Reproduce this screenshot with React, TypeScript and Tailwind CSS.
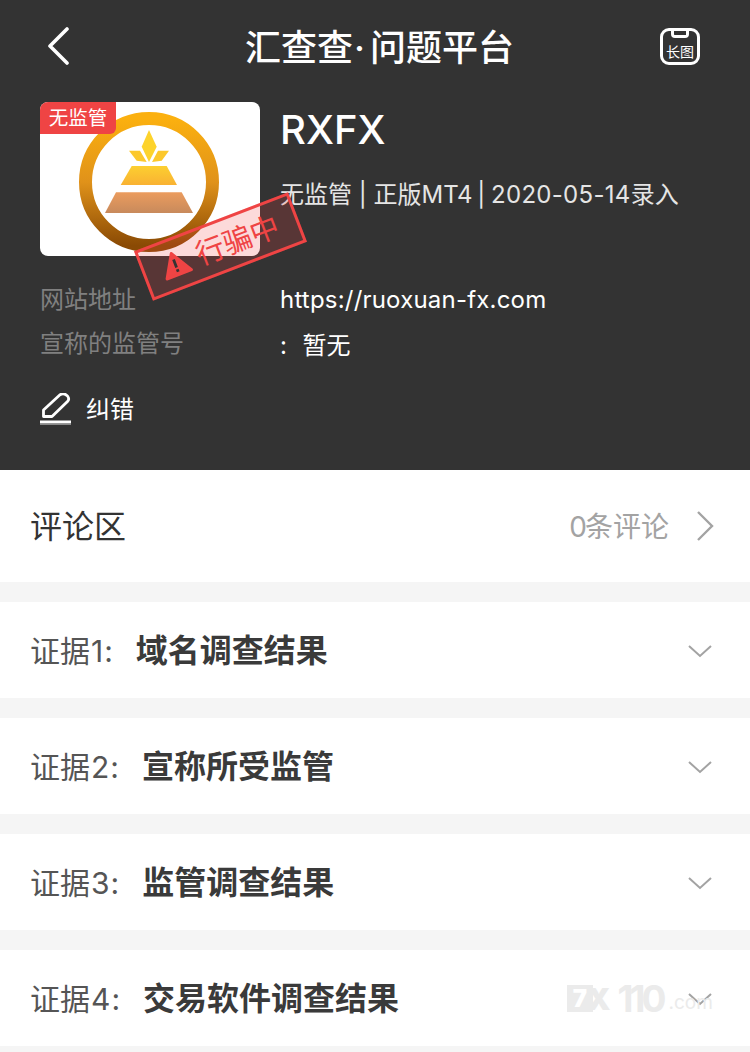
import React from "react";

const font = "font-['Inter','Noto_Sans_CJK_SC',sans-serif]";

function Logo() {
  return (
    <svg width="220" height="154" viewBox="40 102 220 154" className="block">
      <defs>
        <linearGradient id="ring" x1="0" y1="0" x2="0" y2="1">
          <stop offset="0" stopColor="#fbb00f" />
          <stop offset="0.5" stopColor="#e0921a" />
          <stop offset="1" stopColor="#8a4a04" />
        </linearGradient>
        <linearGradient id="top" x1="0" y1="0" x2="0" y2="1">
          <stop offset="0" stopColor="#fccf30" />
          <stop offset="1" stopColor="#f9b233" />
        </linearGradient>
        <linearGradient id="low" x1="0" y1="0" x2="0" y2="1">
          <stop offset="0" stopColor="#eb9c5e" />
          <stop offset="1" stopColor="#c88a5c" />
        </linearGradient>
      </defs>
      <circle cx="149" cy="182" r="63.5" fill="none" stroke="url(#ring)" strokeWidth="13" />
      <path d="M149 130L156.7 146.7L149 162L141.7 146.7Z" fill="#fdd32c" />
      <path d="M129 150.7L140 150.7L146.7 162L136.7 160.7Z" fill="#fcc82c" />
      <path d="M169 150.7L158 150.7L152 162L161.7 160.7Z" fill="#fcc82c" />
      <path d="M131.7 166H166.7L177 185H120.7Z" fill="url(#top)" />
      <path d="M116 192.3H181.7L193 213H105Z" fill="url(#low)" />
    </svg>
  );
}

function Row({ n, title }: { n: number; title: string }) {
  return (
    <div className="flex h-[96px] items-center bg-white pl-[30px] pr-[38px]">
      <span className="pt-[2px] text-[30px] text-[#555]">
        证据<span className="ml-[1px] tracking-[1px]">{n}:</span>
      </span>
      <span className="ml-[22px] pt-[2px] text-[32px] font-bold text-[#3a3a3a]">{title}</span>
      <svg width="24" height="14" viewBox="0 0 24 14" className="ml-auto mt-[2px]" fill="none" stroke="#a3a3a3" strokeWidth="2">
        <path d="M1 2L12 12L23 2" />
      </svg>
    </div>
  );
}

export default function App() {
  return (
    <div className={`relative h-[1052px] w-[750px] overflow-hidden bg-[#f5f5f5] ${font}`}>
      <header className="relative h-[470px] bg-[#333333] text-white">
        <nav className="flex h-[92px] items-center pl-[47px] pr-[50px]">
          <svg width="24" height="38" viewBox="0 0 24 38" fill="none" stroke="white" strokeWidth="3.6" strokeLinecap="round" strokeLinejoin="round">
            <path d="M20 2L3 19L20 36" />
          </svg>
          <h1 className="ml-[174px] pt-[3px] text-[36px] font-medium">
            汇查查<span className="ml-[1px]">·</span><span className="ml-[5px]">问题平台</span>
          </h1>
          <div className="relative ml-auto flex h-[37px] w-[40px] items-end justify-center rounded-[9px] border-[3px] border-white pb-[2px]">
            <div className="absolute left-[8px] top-[-3px] h-[10px] w-[18px] rounded-b-[4px] border-[3px] border-t-0 border-white" />
            <span className="text-[14px] leading-[16px]">长图</span>
          </div>
        </nav>
        <div className="mt-[10px] flex pl-[40px]">
          <div className="relative h-[154px] w-[220px] overflow-hidden rounded-[8px] bg-white">
            <Logo />
            <span className="absolute left-0 top-0 flex h-[32px] w-[76px] items-center justify-center rounded-br-[6px] bg-[#ef4444] pt-[1px] text-[19.5px] text-white">无监管</span>
          </div>
          <div className="ml-[20px]">
            <div className="mt-[3px] text-[40px] font-medium leading-[50px]">RXFX</div>
            <div className="mt-[17px] whitespace-pre text-[24px] leading-[46px] text-[#e5e5e5]">
              无监管 | 正版MT4<span className="ml-[-2px]"> | </span><span className="ml-[-1px] tracking-[0.3px]">2020-05-14</span>录入
            </div>
          </div>
        </div>
        <div className="mt-[22px] grid grid-cols-[240px_1fr] pl-[40px] text-[24px] leading-[44px]">
          <span className="text-[#808080]">网站地址</span>
          <span className="tracking-[0.2px]">https://ruoxuan-fx.com</span>
          <span className="text-[#808080]">宣称的监管号</span>
          <span className="whitespace-pre pt-[2px]">: <span className="ml-[2px]"> 暂无</span></span>
        </div>
        <div className="mt-[24px] flex items-center pl-[40px]">
          <svg width="32" height="34" viewBox="0 0 32 34" fill="none" stroke="white" strokeWidth="2.8" strokeLinejoin="round">
            <path d="M3.5 23.5V17L20 1.8C22 0.4 24 0.4 26 1.8L27.5 3C29 5 29 7 27.5 8.5L12 23.5Z" />
            <path d="M0 29H31" strokeWidth="3" />
            <path d="M0 31.5H31" stroke="#8a8a8a" strokeWidth="1" />
          </svg>
          <span className="ml-[14px] text-[24px]">纠错</span>
        </div>
        <div className="absolute left-[138px] top-[220px] flex h-[53px] w-[165px] rotate-[-21deg] items-center justify-center gap-[8px] border-[3px] border-[#ef4444] bg-[#ef4444]/20 pr-[2px] text-[29px] text-[#ef4444]">
          <svg width="30" height="27" viewBox="0 0 32 28">
            <path d="M16 2L30 26H2Z" fill="#ef4444" stroke="#ef4444" strokeWidth="3" strokeLinejoin="round" />
            <path d="M16 9V18M16 20V23" stroke="#333" strokeWidth="3" />
          </svg>
          <span>行骗中</span>
        </div>
      </header>

      <section className="flex h-[112px] items-center bg-white pl-[30px] pr-[35px]">
        <span className="pt-[2px] text-[32px] text-[#333]">评论区</span>
        <span className="ml-auto pt-[2px] text-[28px] text-[#a3a3a3]">
          <span className="tracking-[-2px]">0</span>条评论
        </span>
        <svg width="20" height="32" viewBox="0 0 20 32" className="ml-[26px]" fill="none" stroke="#a3a3a3" strokeWidth="2.4">
          <path d="M3 2L17 16L3 30" />
        </svg>
      </section>
      <div className="mt-[20px] flex flex-col gap-[20px]">
        <Row n={1} title="域名调查结果" />
        <Row n={2} title="宣称所受监管" />
        <Row n={3} title="监管调查结果" />
        <Row n={4} title="交易软件调查结果" />
      </div>
      <div className="absolute left-[567px] top-[985px] flex h-[27px] items-center text-[#ebebeb]">
        <span className="flex h-[27px] w-[26px] items-center justify-center bg-[#ebebeb] text-[24px] font-black leading-none text-white">7</span>
        <span className="ml-[-6px] text-[30px] font-black leading-none">X</span>
        <span className="ml-[7px] text-[37px] font-bold leading-none tracking-[-4px]">110</span>
        <span className="ml-[6px] mt-[8px] text-[19px] leading-none">.com</span>
      </div>
    </div>
  );
}
